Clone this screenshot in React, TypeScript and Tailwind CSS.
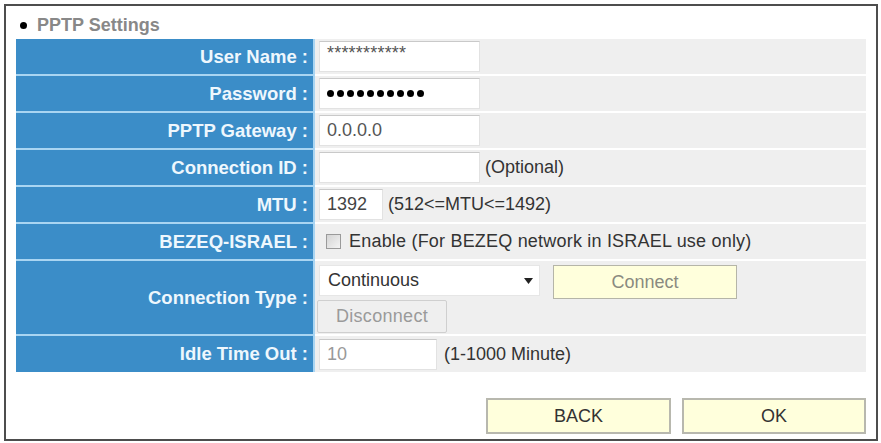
import React from "react";

const Label = ({ children, h = "h-[37px]", last = false }: { children: React.ReactNode; h?: string; last?: boolean }) => (
  <div
    className={`${h} w-[299px] shrink-0 bg-[#3b8dc8] border-r-2 border-[#a9d5f2] ${last ? "" : "border-b-2"} flex items-center justify-end pr-[5px] text-[18.5px] font-bold text-[#eef7fd]`}
  >
    {children}
  </div>
);

const Value = ({ children, h = "h-[37px]", last = false, col = false }: { children: React.ReactNode; h?: string; last?: boolean; col?: boolean }) => (
  <div
    className={`${h} flex-1 bg-[#efefef] ${last ? "" : "border-b-2 border-white"} flex ${col ? "flex-col justify-center items-start" : "items-center"} pl-[4px] text-[18px] text-[#333]`}
  >
    {children}
  </div>
);

const Box = ({ w, children }: { w: string; children?: React.ReactNode }) => (
  <div className={`${w} h-[31px] bg-white border border-[#e2e2e2] border-t-[#c9c9c9] flex items-center pl-[7px] overflow-hidden`}>
    {children}
  </div>
);

export default function App() {
  return (
    <div className="w-[881px] h-[443px] bg-white p-[4px]" style={{ fontFamily: '"Liberation Sans", Arial, sans-serif' }}>
      <div className="w-[874px] h-[437px] border-2 border-[#4d4d4d] pt-[6px] px-[10px]">
        <div className="flex items-center h-[26px] pl-[4px] text-[18px] font-bold text-[#888]">
          <span className="w-[7px] h-[7px] rounded-full bg-black mr-[10px]" />
          PPTP Settings
        </div>
        <div className="mt-[1px] w-[850px] flex flex-col">
          <div className="flex">
            <Label>User Name :</Label>
            <Value>
              <Box w="w-[161px]">
                <span className="text-[18px] text-[#555] leading-none -mt-[8px] tracking-[0.2px]">***********</span>
              </Box>
            </Value>
          </div>
          <div className="flex">
            <Label>Password :</Label>
            <Value>
              <Box w="w-[161px]">
                <div className="flex gap-[3px]">
                  {Array.from({ length: 10 }).map((_, i) => (
                    <span key={i} className="w-[7px] h-[7px] rounded-full bg-black" />
                  ))}
                </div>
              </Box>
            </Value>
          </div>
          <div className="flex">
            <Label>PPTP Gateway :</Label>
            <Value>
              <Box w="w-[161px]">
                <span className="text-[#555]">0.0.0.0</span>
              </Box>
            </Value>
          </div>
          <div className="flex">
            <Label>Connection ID :</Label>
            <Value>
              <Box w="w-[161px]" />
              <span className="ml-[5px]">(Optional)</span>
            </Value>
          </div>
          <div className="flex">
            <Label>MTU :</Label>
            <Value>
              <Box w="w-[64px]">
                <span className="text-[#444]">1392</span>
              </Box>
              <span className="ml-[5px]">(512&lt;=MTU&lt;=1492)</span>
            </Value>
          </div>
          <div className="flex">
            <Label>BEZEQ-ISRAEL :</Label>
            <Value>
              <span className="ml-[7px] shrink-0 w-[15px] h-[15px] border border-[#9a9a9a] bg-gradient-to-br from-[#d4d4d4] to-[#f4f4f4]" />
              <span className="ml-[8px] tracking-[0.2px]">Enable (For BEZEQ network in ISRAEL use only)</span>
            </Value>
          </div>
          <div className="flex">
            <Label h="h-[75px]">Connection Type :</Label>
            <Value h="h-[75px]" col>
              <div className="flex items-center">
                <div className="w-[221px] h-[31px] bg-white border border-[#e6e6e6] flex items-center justify-between pl-[8px] pr-[6px]">
                  <span className="text-[#333]">Continuous</span>
                  <svg width="9" height="6" viewBox="0 0 9 6">
                    <path d="M0 0 L9 0 L4.5 6 Z" fill="#222" />
                  </svg>
                </div>
                <button className="ml-[13px] mt-[3px] w-[184px] h-[34px] bg-[#ffffdc] border border-[#b5b5a8] text-[18px] text-[#8a8a80]">
                  Connect
                </button>
              </div>
              <button className="mt-[1px] -ml-[2px] w-[130px] h-[33px] bg-[#efefef] border border-[#cfcfcf] rounded-[2px] text-[18px] text-[#9a9a9a] tracking-[0.3px]">
                Disconnect
              </button>
            </Value>
          </div>
          <div className="flex">
            <Label h="h-[36px]" last>Idle Time Out :</Label>
            <Value h="h-[36px]" last>
              <Box w="w-[118px]">
                <span className="text-[#999]">10</span>
              </Box>
              <span className="ml-[7px]">(1-1000 Minute)</span>
            </Value>
          </div>
        </div>
        <div className="mt-[26px] w-[850px] flex justify-end gap-[11px]">
          <button className="w-[185px] h-[36px] bg-[#ffffdc] border-2 border-[#b8b8ae] text-[18px] text-[#333]">BACK</button>
          <button className="w-[184px] h-[36px] bg-[#ffffdc] border-2 border-[#b8b8ae] text-[18px] text-[#333]">OK</button>
        </div>
      </div>
    </div>
  );
}
